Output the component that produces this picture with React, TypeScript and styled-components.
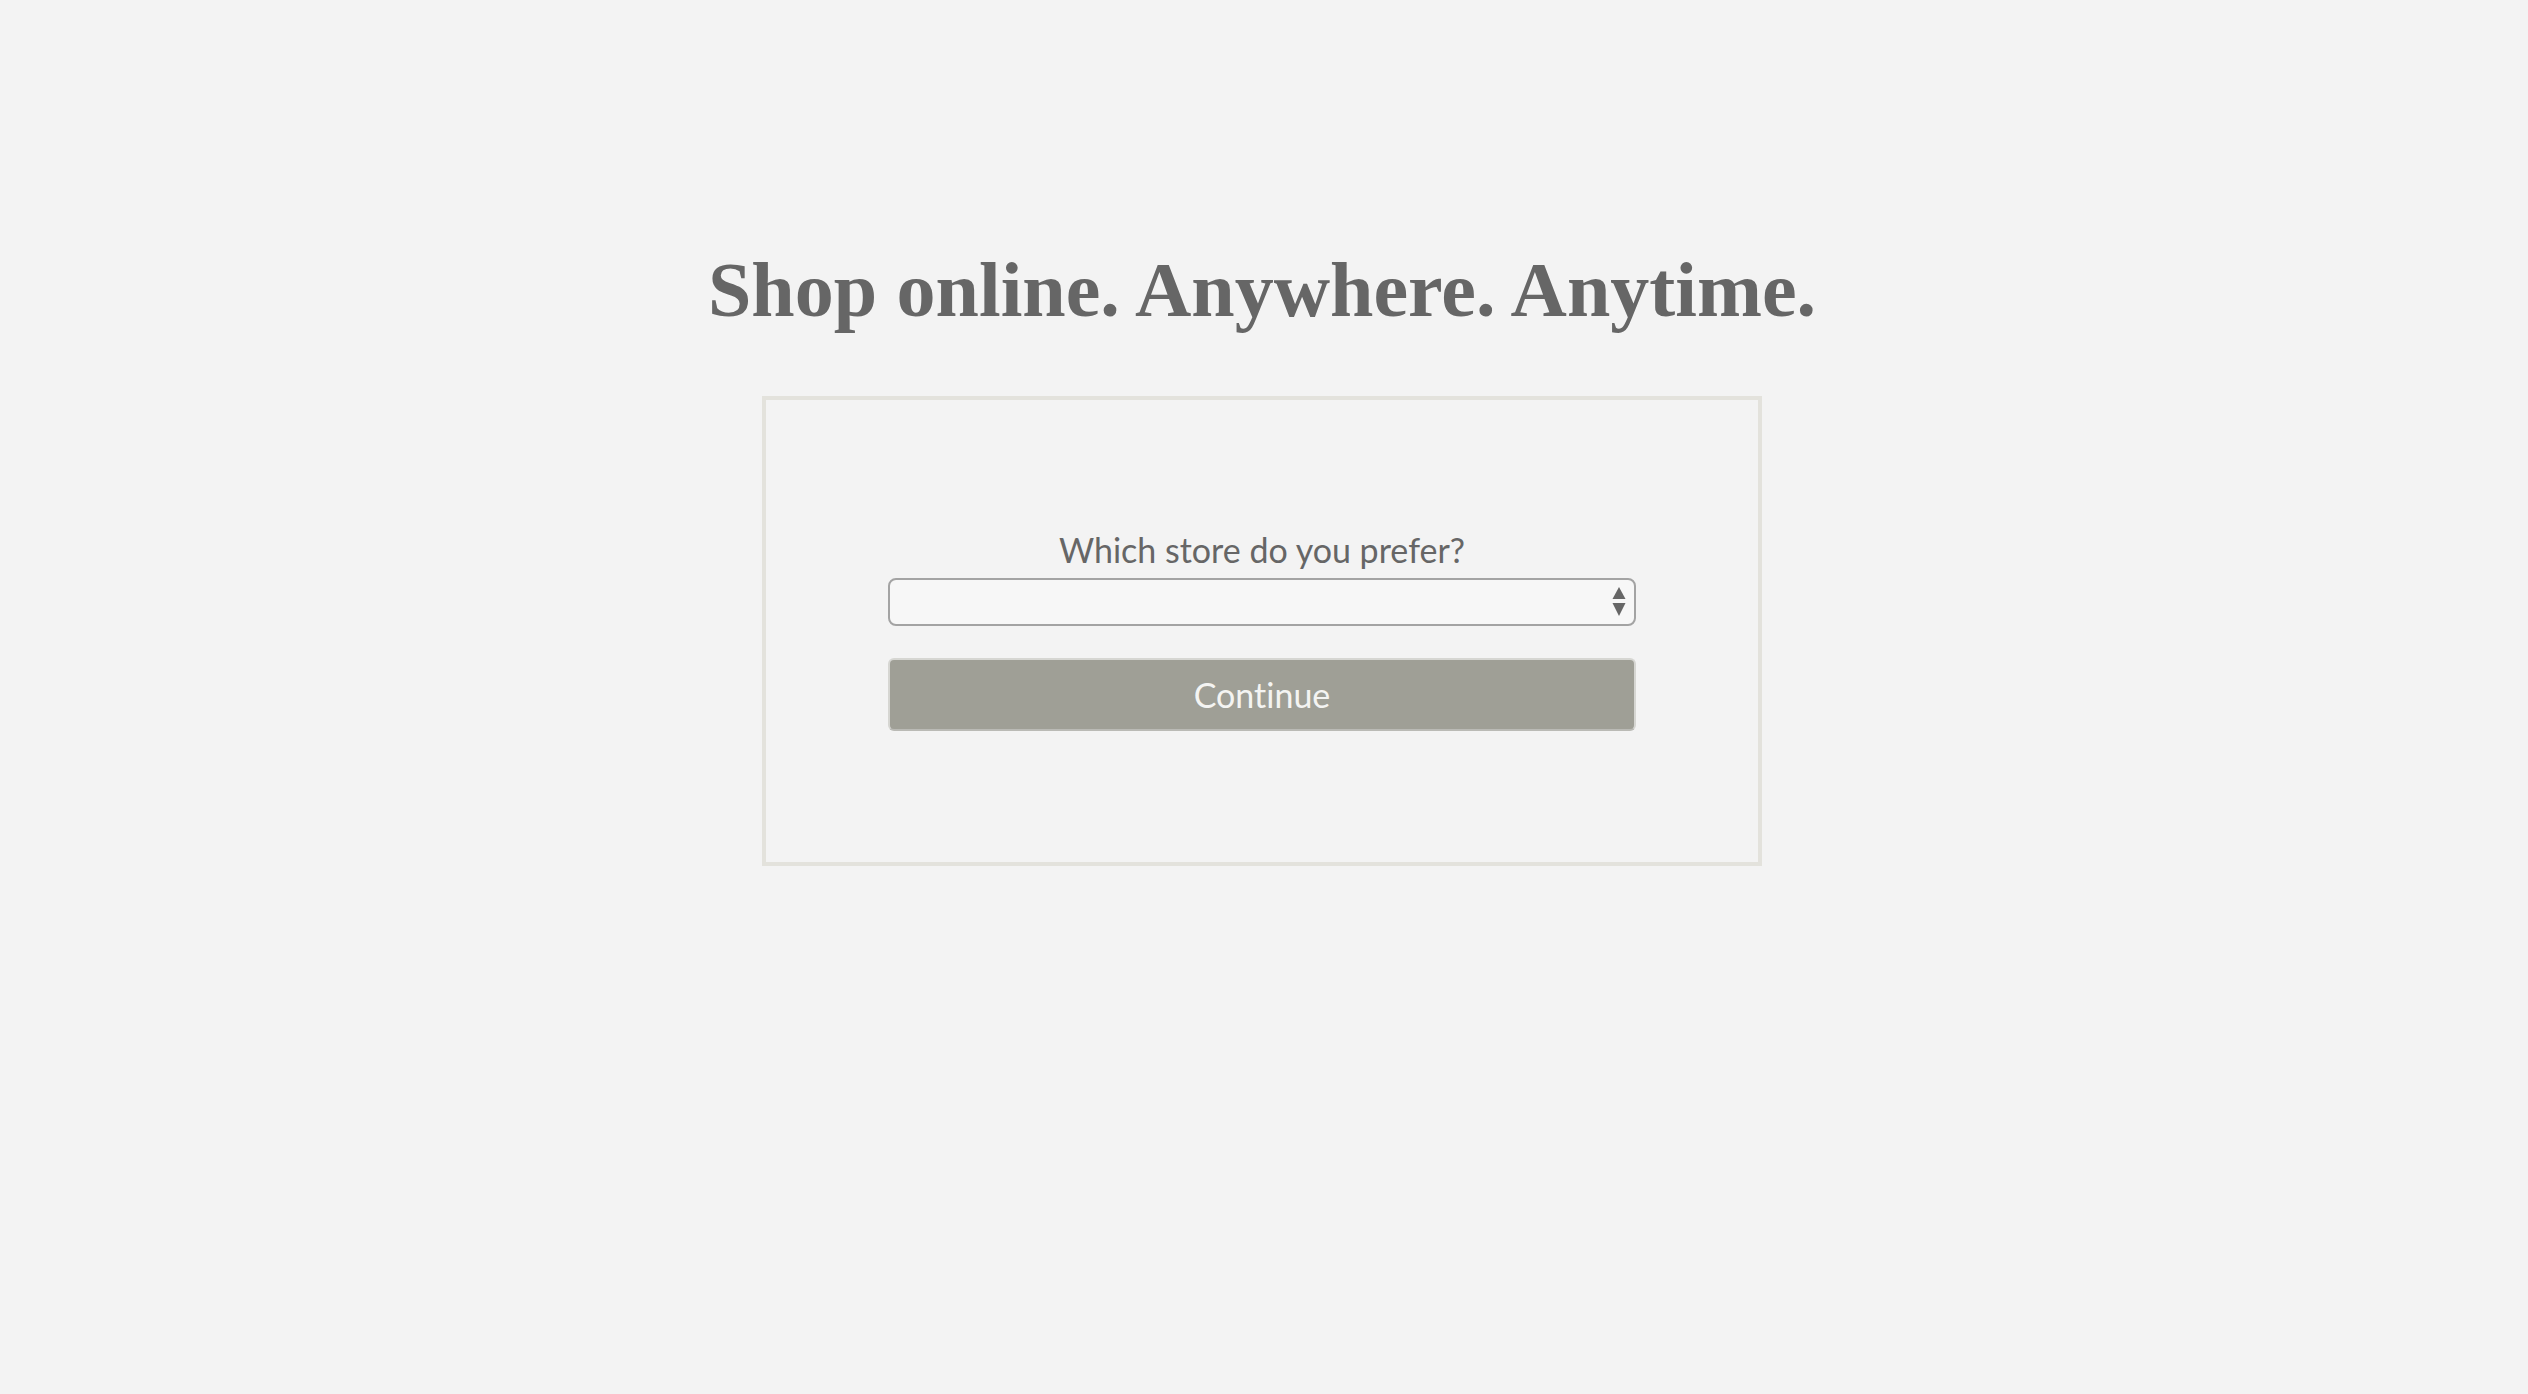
import React from 'react';
import styled, { createGlobalStyle } from 'styled-components';

const GlobalStyle = createGlobalStyle`
  html, body {
    margin: 0;
    padding: 0;
    background: #f3f3f3;
  }
  * {
    box-sizing: border-box;
  }
`;

const Page = styled.div`
  min-height: 100vh;
  display: flex;
  flex-direction: column;
  align-items: center;
  padding: 243px 4px 0 0;
`;

const Title = styled.h1`
  margin: 0;
  font-family: 'Liberation Serif', 'Times New Roman', serif;
  font-weight: 700;
  font-size: 78px;
  line-height: 94px;
  color: #666666;
`;

const Card = styled.div`
  margin-top: 59px;
  width: 1000px;
  height: 470px;
  border: 4px solid #e3e2dc;
  display: flex;
  flex-direction: column;
  align-items: center;
  justify-content: center;
`;

const Form = styled.form`
  width: 748px;
  display: flex;
  flex-direction: column;
  align-items: stretch;
`;

const Label = styled.label`
  font-family: Lato, 'Open Sans', sans-serif;
  font-weight: 400;
  font-size: 34px;
  line-height: 36px;
  color: #666666;
  text-align: center;
  margin-bottom: 10px;
  font-variant-ligatures: none;
`;

const SelectWrap = styled.div`
  position: relative;
  height: 48px;
`;

const Select = styled.select`
  appearance: none;
  -webkit-appearance: none;
  width: 100%;
  height: 100%;
  border: 2px solid #a3a3a3;
  border-radius: 8px;
  background: #f7f7f7;
  font-family: Lato, sans-serif;
  font-size: 20px;
  color: #666666;
  padding: 0 40px 0 12px;
  outline: none;
`;

const Arrows = styled.svg`
  position: absolute;
  right: 10px;
  top: 9px;
  pointer-events: none;
`;

const Button = styled.button`
  margin-top: 32px;
  height: 73px;
  border: 2px solid #d6d6d2;
  border-bottom-color: #babab5;
  border-radius: 6px;
  background: #9f9f96;
  color: #f4f4f2;
  font-family: Lato, 'Open Sans', sans-serif;
  font-weight: 400;
  font-size: 34px;
  font-variant-ligatures: none;
  cursor: pointer;
`;

export default function App() {
  return (
    <>
      <GlobalStyle />
      <Page>
        <Title>Shop online. Anywhere. Anytime.</Title>
        <Card>
          <Form onSubmit={e => e.preventDefault()}>
            <Label htmlFor="store">Which store do you prefer?</Label>
            <SelectWrap>
              <Select id="store" defaultValue="">
                <option value=""></option>
              </Select>
              <Arrows width="14" height="30" viewBox="0 0 14 30">
                <path d="M7 0 L13.5 12 L0.5 12 Z" fill="#666666" />
                <path d="M0.5 16 L13.5 16 L7 29 Z" fill="#666666" />
              </Arrows>
            </SelectWrap>
            <Button type="submit">Continue</Button>
          </Form>
        </Card>
      </Page>
    </>
  );
}
